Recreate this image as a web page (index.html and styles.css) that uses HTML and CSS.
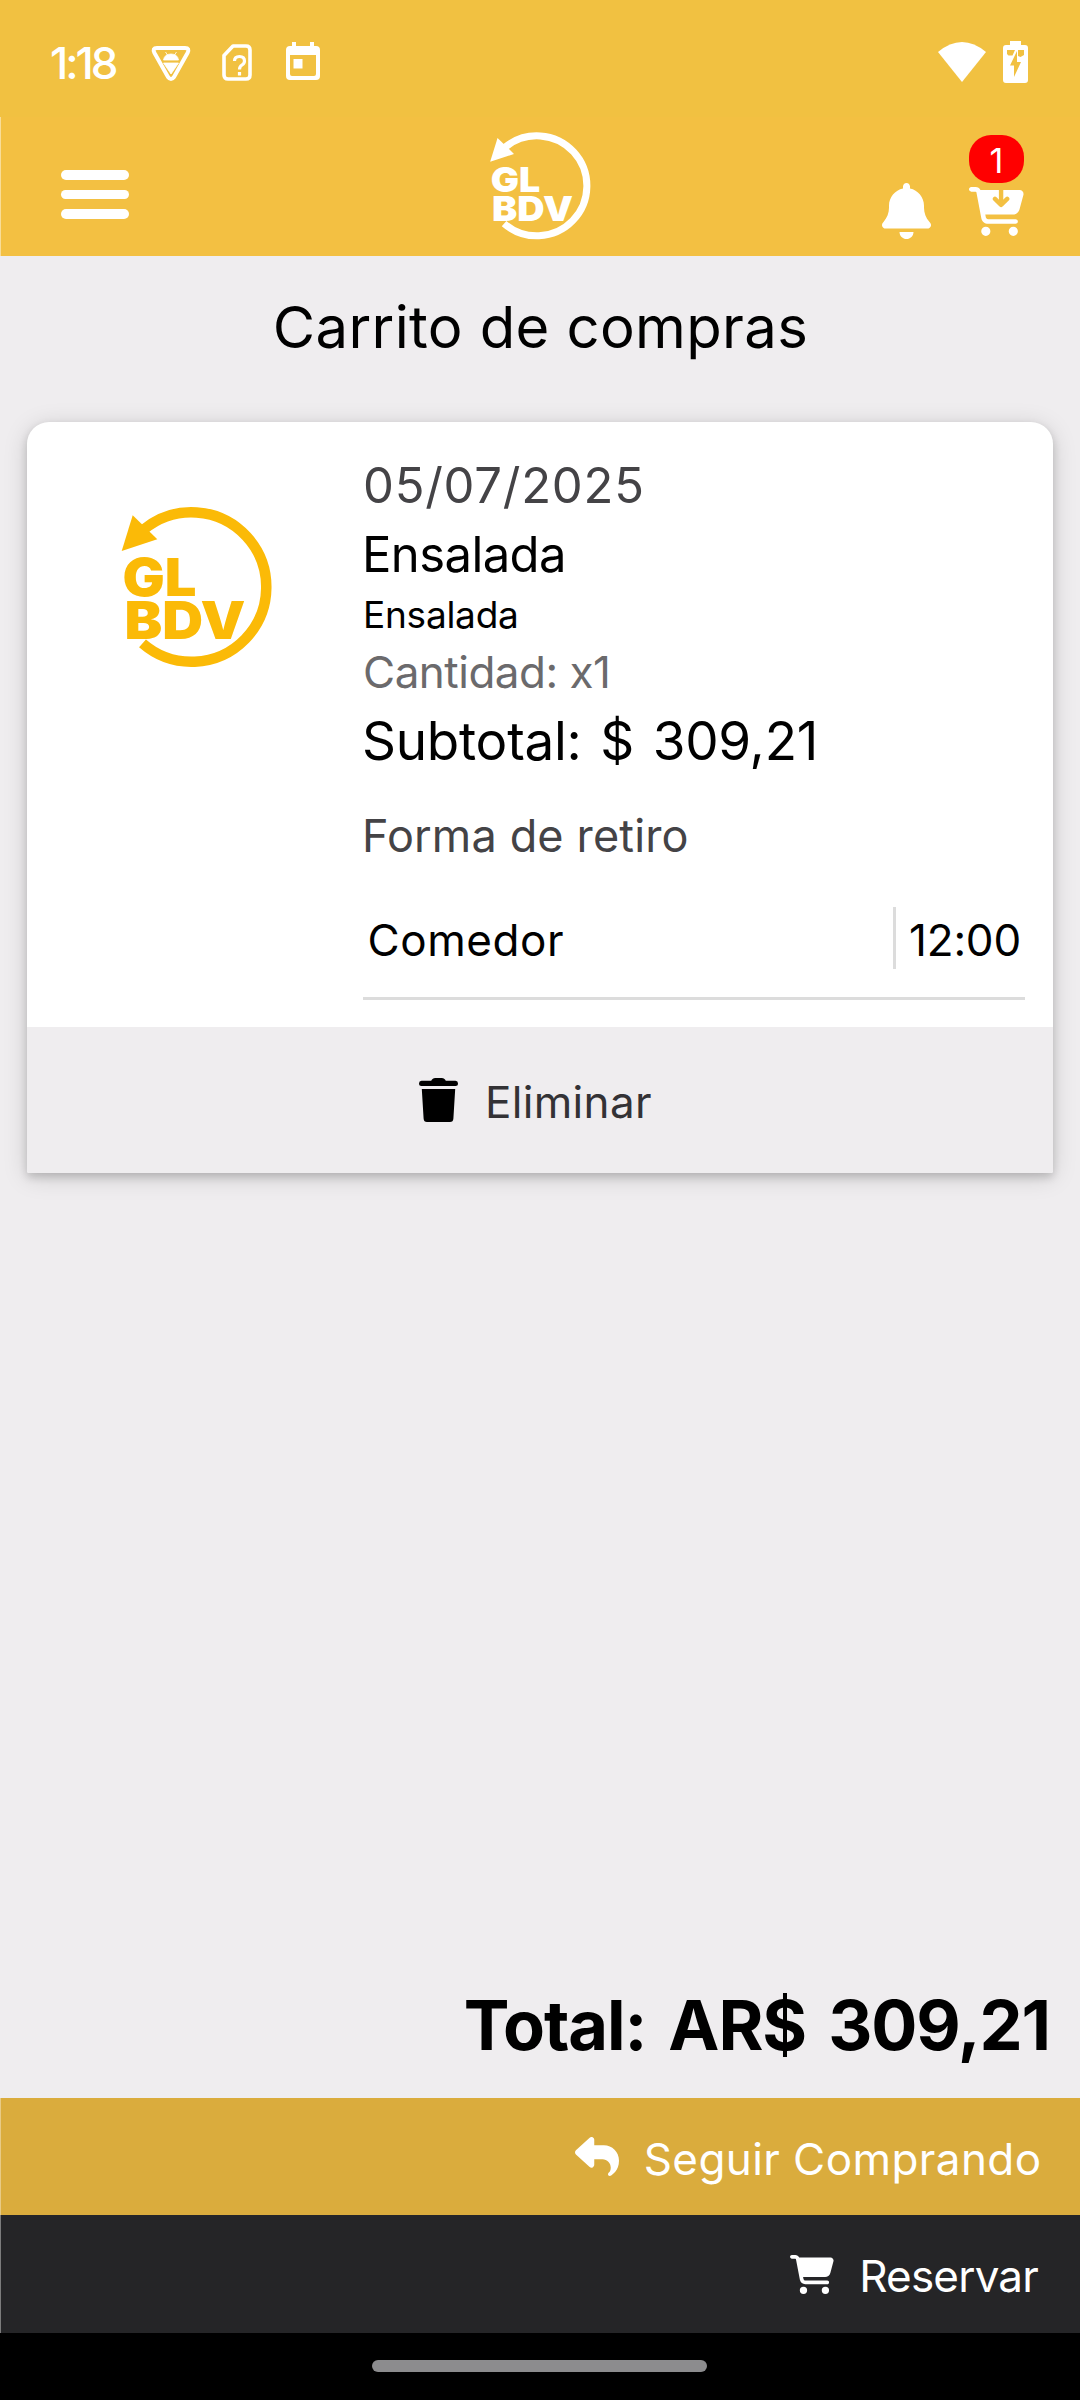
FILE: index.html
```html
<!DOCTYPE html>
<html lang="es">
<head>
<meta charset="utf-8">
<title>Carrito de compras</title>
<link rel="stylesheet" href="styles.css">
</head>
<body>
<svg class="defs" aria-hidden="true">
  <symbol id="logo" viewBox="120 505 153 164">
    <path d="M142.500 643.400A74.750 74.750 0 1 0 144 529.300" fill="none" stroke="currentColor" stroke-width="10.500"/>
    <path d="M121.700 551l11-35.700 24.600 24z" fill="currentColor"/>
    <g class="logo-text" fill="currentColor">
      <text x="122.500" y="596" textLength="74" lengthAdjust="spacingAndGlyphs">GL</text>
      <text x="124.500" y="639" textLength="121" lengthAdjust="spacingAndGlyphs">BDV</text>
    </g>
  </symbol>
  <symbol id="cart" viewBox="0 0 576 512">
    <path fill="currentColor" d="M0 24C0 10.700 10.700 0 24 0H69.500c22 0 41.500 12.800 50.600 32h411c26.300 0 45.500 25 38.600 50.400l-41 152.300c-8.500 31.400-37 53.300-69.500 53.300H170.700l5.400 28.500c2.200 11.300 12.100 19.500 23.600 19.500H488c13.300 0 24 10.700 24 24s-10.700 24-24 24H199.700c-34.600 0-64.300-24.600-70.700-58.500L77.400 54.500c-.7-3.800-4-6.500-7.900-6.500H24C10.700 48 0 37.300 0 24zM128 464a48 48 0 1 1 96 0 48 48 0 1 1-96 0zm336-48a48 48 0 1 1 0 96 48 48 0 1 1 0-96z"/>
  </symbol>
</svg>

<div class="status">
  <span class="clock">1:18</span>
  <svg class="st-shield" viewBox="0 0 40 37"><path d="M6 3h28q5 0 2.500 5L23 32q-3 4-6 0L3.500 8Q1 3 6 3z" fill="none" stroke="#fff" stroke-width="4" stroke-linejoin="round"/><path d="M12.500 15q1-6 7.500-6t7.500 6zM12.500 18h15L20 29zM14.500 7l2 3M25.500 7l-2 3" fill="#fff" stroke="#fff" stroke-width=".8"/></svg>
  <svg class="st-sim" viewBox="0 0 30 37"><path d="M11 2h13q4 0 4 4v25q0 4-4 4H6q-4 0-4-4V11.500z" fill="none" stroke="#fff" stroke-width="3.600" stroke-linejoin="round"/><path d="M12.500 17q0-4.500 5-4.500t5 4.500q0 2.500-2.500 4t-2.500 4.500M17.500 28v3.500" fill="none" stroke="#fff" stroke-width="3.200"/></svg>
  <svg class="st-cal" viewBox="0 0 36 38"><path d="M5 4h2V0h4v4h14V0h4v4h2q4 0 4 4v26q0 4-4 4H5q-4 0-4-4V8q0-4 4-4zM5 13v19q0 2 2 2h22q2 0 2-2V13z" fill="#fff" fill-rule="evenodd"/><path d="M8.500 17h9v9.500h-9z" fill="#fff"/></svg>
  <svg class="st-wifi" viewBox="0 0 48 40"><path d="M0 10Q24-10 48 10L24 40z" fill="#fff"/></svg>
  <svg class="st-bat" viewBox="0 0 25 42"><path d="M7 0h11v4h4q3 0 3 3v32q0 3-3 3H3q-3 0-3-3V7q0-3 3-3h4zM4 9v4l1.500 1.500h4L12 9zM15 9v6l2.500 1 3.500-2V9zM14 10L7 24.500h4V36l7-15h-4z" fill="#fff" fill-rule="evenodd"/></svg>
</div>

<header class="header">
  <div class="menu"><span></span><span></span><span></span></div>
  <svg class="brand"><use href="#logo"/></svg>
  <div class="actions">
    <svg class="bell" viewBox="0 0 448 512"><path fill="#fff" d="M224 0c-17.700 0-32 14.300-32 32V51.200C119 66 64 130.600 64 208v18.800c0 47-17.300 92.400-48.500 127.600l-7.400 8.300c-8.400 9.400-10.400 22.900-5.300 34.400S19.400 416 32 416H416c12.600 0 24-7.400 29.200-18.900s3.100-25-5.300-34.400l-7.400-8.300C401.300 319.200 384 273.900 384 226.800V208c0-77.400-55-142-128-156.800V32c0-17.700-14.300-32-32-32zm45.300 493.300c12-12 18.700-28.300 18.700-45.300H160c0 17 6.700 33.300 18.700 45.300s28.300 18.700 45.300 18.700 33.300-6.700 45.300-18.700z"/></svg>
    <div class="basket">
      <svg class="basket-icon" viewBox="0 0 576 512"><use href="#cart"/><path class="basket-arrow" d="M336 20V185M272 124l64 64 64-64"/></svg>
      <span class="badge">1</span>
    </div>
  </div>
</header>

<main class="main">
  <h1 class="title">Carrito de compras</h1>
  <article class="card">
    <div class="card-body">
      <svg class="card-logo"><use href="#logo"/></svg>
      <div class="details">
        <div class="date">05/07/2025</div>
        <div class="name">Ensalada</div>
        <div class="desc">Ensalada</div>
        <div class="qty">Cantidad: x1</div>
        <div class="subtotal">Subtotal: $ 309,21</div>
        <div class="pickup">Forma de retiro</div>
        <div class="slot"><span class="place">Comedor</span><span class="divider"></span><span class="hour">12:00</span></div>
      </div>
    </div>
    <div class="remove">
      <svg class="trash" viewBox="0 0 39 44"><path d="M13 1.500Q14 0 16 0h7q2 0 3 1.500l.8 1.300H36.500Q39 3 39 5.500T36.500 8h-34Q0 8 0 5.500T2.500 2.800h9.700zM2.800 11h33.400L34.400 40.500Q34.200 44 31 44H8q-3.200 0-3.400-3.500z"/></svg>
      <span>Eliminar</span>
    </div>
  </article>
  <div class="total">Total: AR$ 309,21</div>
</main>

<div class="bar bar-continue">
  <svg class="bar-icon" viewBox="0 32 512 448" preserveAspectRatio="none"><path fill="#fff" d="M205 34.800c11.500 5.100 19 16.600 19 29.200v64H336c97.200 0 176 78.800 176 176c0 113.300-81.500 163.900-100.200 174.100c-2.500 1.400-5.300 1.900-8.100 1.900c-10.900 0-19.700-8.900-19.700-19.700c0-7.500 4.300-14.400 9.800-19.500c9.400-8.800 22.200-26.400 22.200-56.700c0-53-43-96-96-96H224v64c0 12.600-7.400 24.100-19 29.200s-25 3-34.400-5.400l-160-144C3.900 225.700 0 217.100 0 208s3.900-17.700 10.600-23.800l160-144c9.400-8.500 22.900-10.600 34.400-5.400z"/></svg>
  <span>Seguir Comprando</span>
</div>
<div class="bar bar-reserve">
  <svg class="bar-icon"><use href="#cart"/></svg>
  <span>Reservar</span>
</div>
<div class="nav"><div class="handle"></div></div>
</body>
</html>
```
FILE: styles.css
```css
* { box-sizing: border-box; }
body {
  margin: 0;
  width: 1080px;
  height: 2400px;
  display: flex;
  flex-direction: column;
  background: #efedef;
  color: #000;
  font-family: "Inter", sans-serif;
  font-size: 44px;
  overflow: hidden;
}
svg { display: block; flex: none; }
.defs { position: absolute; width: 0; height: 0; }
.logo-text { font-family: "Inter", sans-serif; font-weight: 900; font-size: 52px; letter-spacing: 0; }

.status {
  height: 117px;
  flex: none;
  display: flex;
  align-items: flex-start;
  padding: 0 52px 0 50px;
  background: #f1c141;
  color: #fff;
}
.clock { width: 68px; line-height: 126px; font-weight: 500; letter-spacing: -3px; }
.st-shield { width: 40px; height: 37px; margin: 45px 0 0 33px; }
.st-sim { width: 30px; height: 37px; margin: 44px 0 0 31px; }
.st-cal { width: 36px; height: 38px; margin: 42px 0 0 33px; }
.st-wifi { width: 48px; height: 40px; margin: 42px 17px 0 auto; }
.st-bat { width: 25px; height: 42px; margin-top: 41px; }

.header {
  height: 139px;
  flex: none;
  display: grid;
  grid-template-columns: 488px 103px 1fr;
  align-items: start;
  background: #f3c042;
  color: #fff;
  border-left: 1px solid #f8dd98;
}
.menu { display: flex; flex-direction: column; gap: 10px; padding: 53px 0 0 60px; }
.menu span { width: 68px; height: 9.500px; border-radius: 5px; background: #fff; }
.brand { width: 102.400px; height: 109.700px; margin-top: 14px; }
.actions { display: flex; justify-content: flex-end; gap: 38px; padding-right: 56px; }
.bell { width: 49px; height: 56px; margin-top: 66px; }
.basket { position: relative; margin-top: 70px; }
.basket-icon { width: 55px; height: 49px; }
.basket-arrow { fill: none; stroke: #f3c042; stroke-width: 46; stroke-linecap: round; stroke-linejoin: round; }
.badge {
  position: absolute;
  left: 0;
  top: -52px;
  width: 55px;
  height: 48px;
  border-radius: 22px;
  background: #f00;
  font-size: 34px;
  line-height: 51px;
  text-align: center;
}

.main { flex: 1; display: flex; flex-direction: column; }
.title {
  margin: 0 0 24px;
  padding-left: 1px;
  text-align: center;
  font-size: 58px;
  font-weight: 400;
  letter-spacing: .37px;
  line-height: 142px;
}
.card {
  margin: 0 27px;
  border-radius: 22px 22px 2px 2px;
  background: #fff;
  box-shadow: 0 4px 8px rgba(0, 0, 0, .17), 0 4px 24px rgba(0, 0, 0, .15);
}
.card-body { height: 605px; display: grid; grid-template-columns: 336px 1fr; padding-right: 28px; }
.card-logo { width: 153px; height: 164px; margin: 83px 0 0 93px; color: #fbba07; }
.details { padding-top: 30px; }
.date { font-size: 49px; line-height: 68px; letter-spacing: .75px; color: #444346; }
.name { font-size: 49px; line-height: 69px; letter-spacing: -.6px; margin-left: -1px; }
.desc { font-size: 37px; line-height: 52px; letter-spacing: -.25px; }
.qty { line-height: 62px; letter-spacing: -.5px; color: #6b6a6c; }
.subtotal { font-size: 53px; line-height: 76px; letter-spacing: -.25px; word-spacing: 4px; margin-left: -1px; }
.pickup { font-size: 45px; line-height: 114px; letter-spacing: .15px; margin-left: -1px; color: #444346; }
.slot { display: flex; height: 107px; border-bottom: 3px solid #dcdcdc; line-height: 94px; padding-right: 4px; }
.place { flex: 1; padding-left: 4.500px; letter-spacing: .58px; }
.divider { width: 3px; height: 62px; margin: 14px 13px 0 0; background: #dcdcdc; }
.hour { letter-spacing: -.2px; }
.remove {
  height: 146px;
  display: flex;
  align-items: flex-start;
  padding: 0 0 0 391.500px;
  background: #efedef;
  border-radius: 0 0 2px 2px;
  color: #333235;
  line-height: 150px;
  letter-spacing: .33px;
}
.trash { width: 39px; height: 44px; margin: 51px 27.500px 0 0; fill: #000; }
.total {
  margin-top: auto;
  padding-right: 30px;
  text-align: right;
  font-size: 68.500px;
  font-weight: 700;
  line-height: 144px;
  letter-spacing: -1.100px;
  word-spacing: 7px;
}

.bar {
  flex: none;
  display: flex;
  justify-content: flex-end;
  align-items: center;
  gap: 25px;
  color: #fff;
  border-left: 1px solid;
}
.bar span { padding-top: 4px; }
.bar-icon { width: 44px; height: 39px; }
.bar-continue { height: 117px; padding-right: 38.500px; background: #daac3d; border-color: #e8cb86; letter-spacing: .42px; }
.bar-reserve { height: 118px; padding-right: 42px; background: #252527; border-color: #7c7c7c; letter-spacing: -.81px; }
.nav { height: 67px; flex: none; display: flex; justify-content: center; padding: 27px 2px 0 0; background: #000; }
.handle { width: 335px; height: 12px; border-radius: 6px; background: #8c8c8e; }
```
